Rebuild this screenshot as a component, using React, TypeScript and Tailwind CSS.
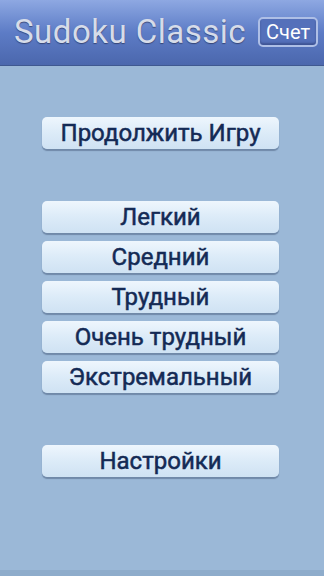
import React from "react";

const Btn = ({ label }: { label: string }) => (
  <div className="w-[237px] h-[32px] rounded-[5px] bg-gradient-to-b from-[#eef6fd] via-[#dcebf8] to-[#cfe2f3] shadow-[0_2px_1px_rgba(60,80,110,0.45)] flex items-center justify-center">
    <span className="text-[24px] leading-none text-[#142a55] font-normal" style={{ fontFamily: "Roboto, 'Noto Sans', sans-serif", WebkitTextStroke: "0.5px #142a55" }}>
      {label}
    </span>
  </div>
);

export default function App() {
  return (
    <div className="w-[324px] h-[576px] bg-[#9bb8d7] flex flex-col overflow-hidden" style={{ fontFamily: "Roboto, 'Noto Sans', sans-serif" }}>
      <div className="h-[66px] bg-gradient-to-b from-[#8ea8e2] via-[#5d7cc6] to-[#4b67ad] border-b border-[#3f5890] flex items-center pl-[14px] pr-[6px] justify-between">
        <span className="text-[33px] leading-none text-[#d6dce9] tracking-[0.5px] [text-shadow:0_1px_1px_rgba(40,50,90,0.7)] mt-[-2px]">
          Sudoku Classic
        </span>
        <div className="w-[60px] h-[30px] rounded-[5px] border-2 border-[#aebfe6] bg-[#5470ba] shadow-[inset_0_-2px_2px_rgba(30,40,90,0.4)] flex items-center justify-center mt-[-2px]">
          <span className="text-[20px] leading-none text-white">Счет</span>
        </div>
      </div>
      <div className="flex flex-col pl-[42px] pt-[51px] flex-1">
        <Btn label="Продолжить Игру" />
        <div className="h-[52px]" />
        <div className="flex flex-col gap-[8px]">
          <Btn label="Легкий" />
          <Btn label="Средний" />
          <Btn label="Трудный" />
          <Btn label="Очень трудный" />
          <Btn label="Экстремальный" />
        </div>
        <div className="h-[52px]" />
        <Btn label="Настройки" />
      </div>
      <div className="h-[6px] bg-[#8eaccb]" />
    </div>
  );
}
